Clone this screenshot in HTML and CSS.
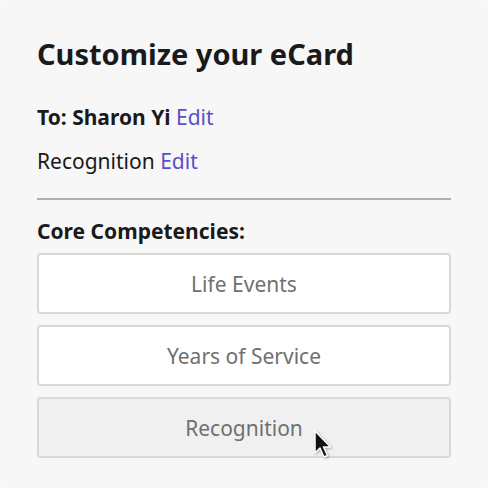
FILE: index.html
```html
<!DOCTYPE html>
<html>
<head>
<meta charset="utf-8">
<link rel="stylesheet" href="styles.css">
</head>
<body>
<div class="card">
  <h1 class="title">Customize your eCard</h1>
  <p class="line bold">To: Sharon Yi <a class="edit">Edit</a></p>
  <p class="line">Recognition <a class="edit">Edit</a></p>
  <hr class="divider">
  <p class="section bold">Core Competencies:</p>
  <div class="options">
    <div class="option">Life Events</div>
    <div class="option">Years of Service</div>
    <div class="option hover">Recognition
      <svg class="cursor" width="22" height="30" viewBox="0 0 22 30">
        <path d="M3 2 L3 24 L8 19 L12 28 L15.5 26.5 L11.5 18 L18.5 18 Z" fill="#111" stroke="#fff" stroke-width="1.5" stroke-linejoin="round"/>
      </svg>
    </div>
  </div>
</div>
</body>
</html>
```

FILE: styles.css
```css
html, body { margin: 0; padding: 0; }
body {
  background: #f9f9f9;
  font-family: "Noto Sans", "Open Sans", sans-serif;
  width: 488px;
  height: 488px;
  overflow: hidden;
}
.card {
  box-sizing: border-box;
  width: 488px;
  height: 488px;
  margin: 0;
  background: #f7f7f7;
  border-radius: 8px;
  padding: 34px 37px 0 37px;
}
.title {
  margin: 0;
  font-size: 29px;
  font-weight: 700;
  color: #1a1a1a;
  line-height: 40px;
}
.line {
  margin: 0;
  font-size: 21px;
  color: #1a1a1a;
  line-height: 28px;
}
.line.bold { margin-top: 29px; }
.line + .line { margin-top: 16px; }
.bold { font-weight: 700; }
.edit { color: #5b4fc4; font-weight: 400; }
.divider {
  margin: 23px 0 0 0;
  border: 0;
  height: 2px;
  background: #b0b0b0;
}
.section {
  margin: 17px 0 0 0;
  font-size: 21px;
  line-height: 28px;
  color: #1a1a1a;
}
.options {
  display: flex;
  flex-direction: column;
  gap: 11px;
  margin-top: 8px;
}
.option {
  position: relative;
  height: 61px;
  box-sizing: border-box;
  border: 2px solid #d8d8d8;
  border-radius: 4px;
  background: #fff;
  display: flex;
  align-items: center;
  justify-content: center;
  font-size: 21px;
  color: #707070;
}
.option.hover { background: #f0f0f0; }
.cursor {
  position: absolute;
  left: 273px;
  top: 30px;
  filter: drop-shadow(1px 1px 1px rgba(0,0,0,0.3));
}
```
